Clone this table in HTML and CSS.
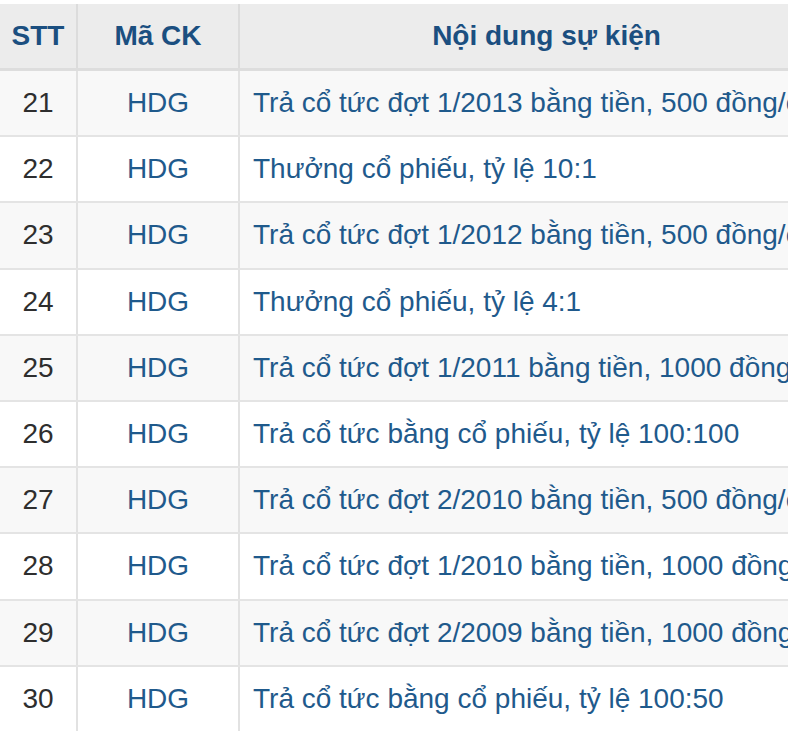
FILE: index.html
```html
<!DOCTYPE html>
<html lang="vi">
<head>
<meta charset="utf-8">
<link rel="stylesheet" href="styles.css">
</head>
<body>
<div class="wrap">
<table class="events">
<colgroup><col class="c-stt"><col class="c-ma"><col class="c-nd"></colgroup>
<thead>
<tr><th>STT</th><th>Mã CK</th><th>Nội dung sự kiện</th></tr>
</thead>
<tbody>
<tr><td class="stt">21</td><td class="ma">HDG</td><td class="nd">Trả cổ tức đợt 1/2013 bằng tiền, 500 đồng/cổ phiếu</td></tr>
<tr><td class="stt">22</td><td class="ma">HDG</td><td class="nd">Thưởng cổ phiếu, tỷ lệ 10:1</td></tr>
<tr><td class="stt">23</td><td class="ma">HDG</td><td class="nd">Trả cổ tức đợt 1/2012 bằng tiền, 500 đồng/cổ phiếu</td></tr>
<tr><td class="stt">24</td><td class="ma">HDG</td><td class="nd">Thưởng cổ phiếu, tỷ lệ 4:1</td></tr>
<tr><td class="stt">25</td><td class="ma">HDG</td><td class="nd">Trả cổ tức đợt 1/2011 bằng tiền, 1000 đồng/cổ phiếu</td></tr>
<tr><td class="stt">26</td><td class="ma">HDG</td><td class="nd">Trả cổ tức bằng cổ phiếu, tỷ lệ 100:100</td></tr>
<tr><td class="stt">27</td><td class="ma">HDG</td><td class="nd">Trả cổ tức đợt 2/2010 bằng tiền, 500 đồng/cổ phiếu</td></tr>
<tr><td class="stt">28</td><td class="ma">HDG</td><td class="nd">Trả cổ tức đợt 1/2010 bằng tiền, 1000 đồng/cổ phiếu</td></tr>
<tr><td class="stt">29</td><td class="ma">HDG</td><td class="nd">Trả cổ tức đợt 2/2009 bằng tiền, 1000 đồng/cổ phiếu</td></tr>
<tr><td class="stt">30</td><td class="ma">HDG</td><td class="nd">Trả cổ tức bằng cổ phiếu, tỷ lệ 100:50</td></tr>
</tbody>
</table>
</div>
</body>
</html>
```
FILE: styles.css
```css
html, body {
  margin: 0;
  padding: 0;
  background: #ffffff;
}
.wrap {
  width: 788px;
  padding-top: 4px;
  overflow: hidden;
  font-family: "Liberation Sans", Arial, sans-serif;
}
.events {
  border-collapse: collapse;
  table-layout: fixed;
  width: 853px;
}
.c-stt { width: 77px; }
.c-ma { width: 162px; }
.c-nd { width: 614px; }
.events th {
  height: 64px;
  padding: 0;
  background: #ececec;
  color: #1b4f80;
  font-size: 28px;
  font-weight: bold;
  text-align: center;
  border-left: 2px solid #dcdcdc;
  border-bottom: 3px solid #dddddd;
  white-space: nowrap;
}
.events td {
  height: 64.2px;
  padding: 0;
  font-size: 28px;
  white-space: nowrap;
  overflow: hidden;
  border-left: 2px solid #e2e2e2;
  border-bottom: 2px solid #e4e4e4;
}
.events th:first-child, .events td:first-child { border-left: none; }
.events tbody tr:nth-child(odd) td { background: #f8f8f8; }
.events tbody tr:last-child td { border-bottom: none; }
.stt { text-align: center; color: #2e2e2e; }
.ma { text-align: center; color: #1f5a8c; }
.nd { text-align: left; padding-left: 13px !important; color: #1f5a8c; }
```
